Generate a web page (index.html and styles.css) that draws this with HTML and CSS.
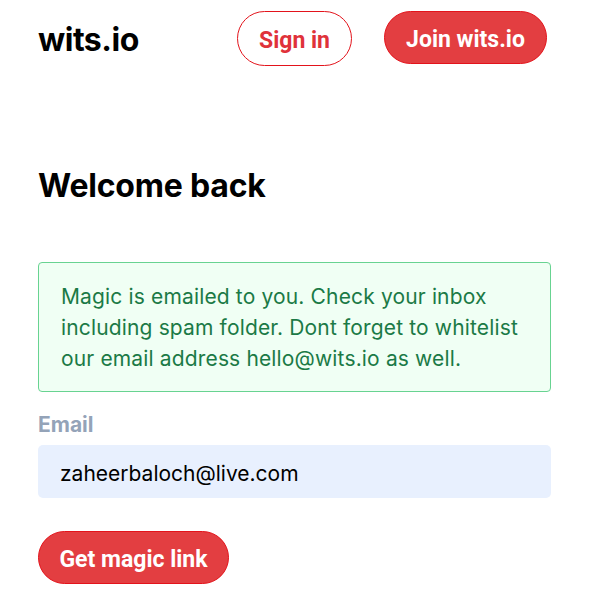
FILE: index.html
```html
<!DOCTYPE html>
<html lang="en">
<head>
    <meta charset="UTF-8">
    <meta name="viewport" content="width=device-width, initial-scale=1.0">
    <title>Sign in - wits.io</title>
    <link rel="stylesheet" href="styles.css">
</head>
<body>
    <div class="container">
        <div class="header">
            <div class="logo">wits.io</div>
            <div class="nav">
                <a href="#" class="btn btn-outline">Sign in</a>
                <a href="#" class="btn btn-solid">Join wits.io</a>
            </div>
        </div>

        <h1 class="title">Welcome back</h1>

        <div class="notice">
            Magic is emailed to you. Check your inbox including spam folder. Dont forget to whitelist our email address hello@wits.io as well.
        </div>

        <form class="login-form">
            <label for="email">Email</label>
            <input type="email" id="email" value="zaheerbaloch@live.com">
            <button type="submit" class="btn btn-solid submit-btn">Get magic link</button>
        </form>
    </div>
</body>
</html>
```

FILE: styles.css
```css
* {
    margin: 0;
    padding: 0;
    box-sizing: border-box;
}

body {
    font-family: Inter, 'Noto Sans', sans-serif;
    background: white;
    color: #000;
}

.container {
    padding: 11px 49px 0 38px;
}

.header {
    display: flex;
    align-items: center;
    justify-content: space-between;
}

.header .nav {
    margin-right: 4px;
}

.logo {
    font-size: 32px;
    font-weight: 700;
    letter-spacing: -0.5px;
    padding-top: 2px;
}

.nav {
    display: flex;
    gap: 32px;
}

.btn {
    display: inline-flex;
    align-items: center;
    justify-content: center;
    height: 55px;
    padding: 3px 0 0;
    border-radius: 28px;
    font-family: Roboto, 'Noto Sans', sans-serif;
    font-size: 23px;
    font-weight: 700;
    text-decoration: none;
    border: 1px solid #e3131b;
    cursor: pointer;
}

.btn-outline {
    color: #e0323a;
    background: white;
    width: 115px;
}

.btn-solid {
    color: white;
    background: #e33e41;
    width: 163px;
    height: 53px;
}

.title {
    font-size: 32px;
    font-weight: 700;
    letter-spacing: -0.2px;
    margin-top: 100px;
}

.notice {
    margin-top: 57px;
    padding: 18px 22px 17px;
    background: #f0fff4;
    border: 1px solid #68d391;
    border-radius: 4px;
    color: #1b7a46;
    font-size: 21px;
    letter-spacing: 0.15px;
    line-height: 31px;
}

.login-form {
    margin-top: 20px;
}

label {
    display: block;
    color: #94a3b8;
    font-size: 21px;
    font-weight: 700;
    margin-bottom: 8px;
}

input {
    display: block;
    width: 100%;
    height: 53px;
    padding: 3px 22px 0;
    border: none;
    border-radius: 5px;
    background: #e8f0fe;
    font-family: Inter, 'Noto Sans', sans-serif;
    font-size: 21px;
    color: #000;
}

.submit-btn {
    margin-top: 33px;
    width: 191px;
    height: 53px;
}
```
